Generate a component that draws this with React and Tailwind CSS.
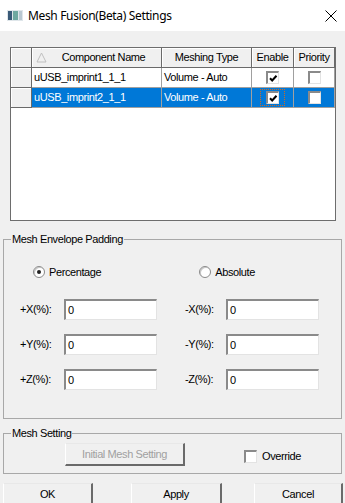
import React from 'react';

const body = { fontFamily: '"Liberation Sans", Arial, sans-serif' };

const Check = () => (
  <svg width="9" height="9" viewBox="0 0 9 9" className="block">
    <path d="M1 4.2 L3.2 6.5 L7.5 1.8" stroke="#000" strokeWidth="2" fill="none" />
  </svg>
);

const CheckBox = ({ checked, focus }) => {
  const box = (
    <div className="w-[13px] h-[13px] bg-white border-t-2 border-l-2 border-[#8a8a8a] border-b border-r border-b-[#e3e3e3] border-r-[#e3e3e3] flex items-center justify-center">
      {checked && <Check />}
    </div>
  );
  if (!focus) return box;
  return (
    <div className="w-[25px] h-[17px] border border-dotted border-[#d2691e] flex items-center justify-center">
      {box}
    </div>
  );
};

const Radio = ({ on }) => (
  <div className="w-[12px] h-[12px] rounded-full bg-white border border-[#8a8a8a] shadow-[inset_1px_1px_0_#c8c8c8] flex items-center justify-center">
    {on && <div className="w-[4px] h-[4px] rounded-full bg-[#222]" />}
  </div>
);

const Input = () => (
  <div className="w-[93px] h-[21px] bg-white border-t-2 border-l-2 border-t-[#8a8a8a] border-l-[#8a8a8a] border-b border-r border-b-[#e3e3e3] border-r-[#e3e3e3] pl-[2px] flex items-center text-[11px]">
    0
  </div>
);

const HeadCell = ({ w, children, className = '' }) => (
  <div
    className={`${w} h-full shrink-0 bg-[#f0f0f0] border-r border-b border-[#6a6a6a] shadow-[inset_1px_1px_0_#fff] flex items-center justify-center ${className}`}
  >
    {children}
  </div>
);

const rows = [
  { name: 'uUSB_imprint1_1_1', sel: false },
  { name: 'uUSB_imprint2_1_1', sel: true },
];

const padRows = [
  ['+X(%):', '-X(%):'],
  ['+Y(%):', '-Y(%):'],
  ['+Z(%):', '-Z(%):'],
];

const Button = ({ w, children, disabled }) => (
  <div
    className={`${w} h-[23px] shrink-0 bg-[#f0f0f0] border-t border-l border-t-[#e8e8e8] border-l-[#fff] border-r-2 border-b-2 border-r-[#6a6a6a] border-b-[#6a6a6a] flex items-center justify-center text-[11px] ${disabled ? 'text-[#a0a0a0]' : 'text-black'}`}
  >
    {children}
  </div>
);

export default function App() {
  return (
    <div
      className="w-[345px] h-[503px] bg-[#f0f0f0] overflow-hidden text-black tracking-[-0.4px]"
      style={body}
    >
      {/* title bar */}
      <div className="h-[31px] bg-white flex items-center tracking-[-0.35px]">
        <svg width="16" height="11" viewBox="0 0 16 11" className="ml-[7px]">
          <rect x="0" y="0" width="16" height="11" fill="#dfe6ea" />
          <rect x="1" y="1" width="4" height="9" fill="#3a5a78" />
          <rect x="6" y="1" width="5" height="9" fill="#6fa8a0" />
          <rect x="12" y="1" width="3" height="9" fill="#b9c8d2" />
        </svg>
        <span
          className="ml-[5px] text-[12px] text-black"
          style={{ fontFamily: '"Noto Sans", "Open Sans", sans-serif' }}
        >
          Mesh Fusion(Beta) Settings
        </span>
        <svg width="12" height="12" viewBox="0 0 12 12" className="ml-auto mr-[8px]">
          <path d="M0.5 0.5 L11.5 11.5 M11.5 0.5 L0.5 11.5" stroke="#000" strokeWidth="1" />
        </svg>
      </div>

      {/* grid */}
      <div className="mt-[16px] ml-[10px] w-[326px] h-[174px] border border-[#6d6d6d] bg-white text-[11px]">
        <div className="flex h-[20px]">
          <HeadCell w="w-[21px]" />
          <HeadCell w="w-[130px]" className="relative pl-[14px]">
            <svg width="11" height="11" viewBox="0 0 11 11" className="absolute left-[4px] top-[4px]">
              <path d="M5.5 1 L10 10 L1 10 Z" stroke="#c0c0c0" fill="none" />
            </svg>
            Component Name
          </HeadCell>
          <HeadCell w="w-[90px]">Meshing Type</HeadCell>
          <HeadCell w="w-[42px]">Enable</HeadCell>
          <HeadCell w="w-[41px]">Priority</HeadCell>
        </div>
        {rows.map((r) => (
          <div key={r.name} className="flex h-[20px]">
            <HeadCell w="w-[21px]" />
            <div
              className={`w-[303px] flex ${r.sel ? 'bg-[#0078d7] text-white' : 'bg-white text-black'}`}
            >
              <div className="w-[130px] h-full border-r border-b border-[#a0a0a0] pl-[2px] flex items-center">
                {r.name}
              </div>
              <div className="w-[90px] h-full border-r border-b border-[#a0a0a0] pl-[2px] flex items-center">
                Volume - Auto
              </div>
              <div className="w-[42px] h-full border-r border-b border-[#a0a0a0] flex items-center justify-center">
                <CheckBox checked focus={r.sel} />
              </div>
              <div className="w-[41px] h-full border-r border-b border-[#a0a0a0] flex items-center justify-center">
                <CheckBox />
              </div>
            </div>
          </div>
        ))}
      </div>

      {/* Mesh Envelope Padding */}
      <fieldset className="mt-[11px] ml-[3px] w-[339px] border border-[#a8a8a8] text-[11px]">
        <legend className="ml-[7px] px-[1px] leading-[14px]">Mesh Envelope Padding</legend>
        <div className="h-[172px] flex flex-col">
          <div className="mt-[18px] h-[16px] flex items-center">
            <div className="ml-[29px]">
              <Radio on />
            </div>
            <span className="ml-[4px]">Percentage</span>
            <div className="ml-[98px]">
              <Radio />
            </div>
            <span className="ml-[4px]">Absolute</span>
          </div>
          <div className="mt-[19px] flex flex-col gap-[14px]">
            {padRows.map(([a, b]) => (
              <div key={a} className="h-[21px] flex items-center">
                <span className="ml-[16px] w-[44px]">{a}</span>
                <Input />
                <span className="ml-[28px] w-[41px]">{b}</span>
                <Input />
              </div>
            ))}
          </div>
        </div>
      </fieldset>

      {/* Mesh Setting */}
      <fieldset className="mt-[7px] ml-[3px] w-[339px] border border-[#a8a8a8] text-[11px]">
        <legend className="ml-[7px] px-[1px] leading-[14px]">Mesh Setting</legend>
        <div className="h-[33px] flex items-start">
          <div className="mt-[3px] ml-[61px]">
            <Button w="w-[120px]" disabled>
              Initial Mesh Setting
            </Button>
          </div>
          <div className="mt-[8px] ml-[59px] flex items-center">
            <CheckBox />
            <span className="ml-[5px]">Override</span>
          </div>
        </div>
      </fieldset>

      {/* buttons */}
      <div className="mt-[9px] ml-[3px] flex">
        <Button w="w-[90px]">OK</Button>
        <div className="ml-[38px]">
          <Button w="w-[91px]">Apply</Button>
        </div>
        <div className="ml-[32px]">
          <Button w="w-[89px]">Cancel</Button>
        </div>
      </div>
    </div>
  );
}
